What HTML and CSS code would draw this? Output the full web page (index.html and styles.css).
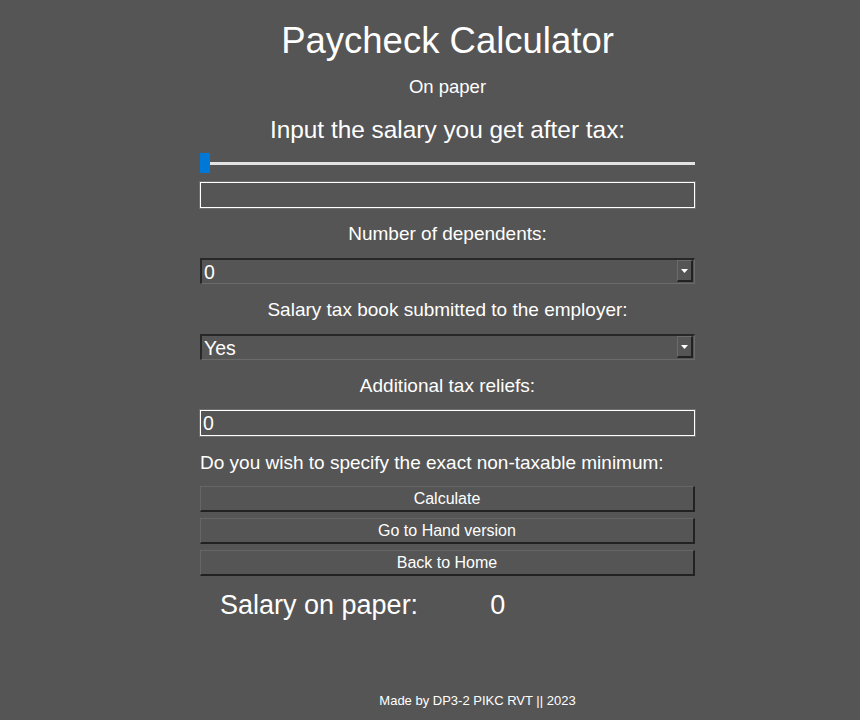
FILE: index.html
```html
<!DOCTYPE html>
<html>
<head>
<meta charset="utf-8">
<title>Paycheck Calculator</title>
<link rel="stylesheet" href="styles.css">
</head>
<body>
<main class="page">
  <h1 class="title">Paycheck Calculator</h1>
  <p class="subtitle">On paper</p>
  <p class="prompt">Input the salary you get after tax:</p>
  <input class="slider" type="range" min="0" max="100" value="0">
  <input class="field field-salary" type="text" value="">
  <p class="label">Number of dependents:</p>
  <div class="select-wrap">
    <select class="select"><option>0</option></select>
    <span class="select-btn"><svg width="7" height="4" viewBox="0 0 7 4"><path d="M0 0H7L3.5 4Z" fill="#fff"/></svg></span>
  </div>
  <p class="label">Salary tax book submitted to the employer:</p>
  <div class="select-wrap">
    <select class="select"><option>Yes</option></select>
    <span class="select-btn"><svg width="7" height="4" viewBox="0 0 7 4"><path d="M0 0H7L3.5 4Z" fill="#fff"/></svg></span>
  </div>
  <p class="label">Additional tax reliefs:</p>
  <input class="field" type="text" value="0">
  <p class="question">Do you wish to specify the exact non-taxable minimum:</p>
  <div class="buttons">
    <button class="btn">Calculate</button>
    <button class="btn">Go to Hand version</button>
    <button class="btn">Back to Home</button>
  </div>
  <div class="result">
    <span class="result-label">Salary on paper:</span>
    <span class="result-value">0</span>
  </div>
</main>
<footer class="footer">Made by DP3-2 PIKC RVT || 2023</footer>
</body>
</html>
```
FILE: styles.css
```css
html, body {
  margin: 0;
  padding: 0;
}
body {
  background: #555555;
  color: #ffffff;
  font-family: "Liberation Sans", Arial, sans-serif;
  min-height: 720px;
  display: flex;
  flex-direction: column;
  align-items: center;
  padding-left: 35px;
  box-sizing: border-box;
}
.page {
  width: 495px;
  display: flex;
  flex-direction: column;
}
.title {
  margin: 21px 0 0;
  font-size: 36.5px;
  line-height: 40px;
  font-weight: normal;
  text-align: center;
}
.subtitle {
  margin: 15px 0 0;
  font-size: 18.5px;
  line-height: 22px;
  text-align: center;
}
.prompt {
  margin: 18px 0 0;
  font-size: 24.4px;
  line-height: 28px;
  text-align: center;
}
.slider {
  -webkit-appearance: none;
  appearance: none;
  margin: 9px 0 0;
  padding: 0;
  width: 495px;
  height: 20px;
  background: transparent;
  display: block;
}
.slider::-webkit-slider-runnable-track {
  height: 3px;
  background: #e3e3e3;
  border: none;
}
.slider::-webkit-slider-thumb {
  -webkit-appearance: none;
  appearance: none;
  width: 10px;
  height: 20px;
  margin-top: -8.5px;
  background: #0078d7;
  border: none;
  border-radius: 0;
}
.field {
  margin: 13px 0 0;
  box-sizing: border-box;
  width: 495px;
  height: 26px;
  padding: 0 2px;
  background: #555555;
  color: #ffffff;
  border: 1px solid #ffffff;
  box-shadow: 0 0 0 1px #6e6e6e;
  font-family: "Liberation Sans", Arial, sans-serif;
  font-size: 19.5px;
  outline: none;
}
.field-salary {
  margin-top: 9px;
}
.label {
  margin: 15px 0 0;
  font-size: 19px;
  line-height: 22px;
  text-align: center;
}
.select-wrap {
  position: relative;
  margin: 13px 0 0;
  width: 495px;
  height: 26px;
}
.select {
  -webkit-appearance: none;
  appearance: none;
  box-sizing: border-box;
  width: 495px;
  height: 26px;
  margin: 0;
  padding: 0 2px;
  background: #555555;
  color: #ffffff;
  border-style: solid;
  border-width: 2px 1px 1px 2px;
  border-color: #272727 #6b6b6b #6b6b6b #272727;
  font-family: "Liberation Sans", Arial, sans-serif;
  font-size: 19.5px;
  outline: none;
}
.select-btn {
  position: absolute;
  right: 2px;
  top: 2px;
  width: 16px;
  height: 22px;
  box-sizing: border-box;
  border-style: solid;
  border-width: 1px 2px 2px 1px;
  border-color: #6b6b6b #222222 #222222 #6b6b6b;
  background: #555555;
  display: flex;
  align-items: center;
  justify-content: center;
}
.question {
  margin: 16px 0 0;
  font-size: 19px;
  line-height: 22px;
  text-align: left;
}
.buttons {
  margin: 12px 0 0;
  display: flex;
  flex-direction: column;
  gap: 6px;
}
.btn {
  box-sizing: border-box;
  width: 495px;
  height: 26px;
  margin: 0;
  padding: 0;
  background: #555555;
  color: #ffffff;
  border-style: solid;
  border-width: 1px 2px 2px 1px;
  border-color: #666666 #222222 #222222 #666666;
  font-family: "Liberation Sans", Arial, sans-serif;
  font-size: 16px;
}
.result {
  margin: 13px 0 0;
  padding-left: 20px;
  display: flex;
  gap: 72px;
  font-size: 27px;
  line-height: 32px;
}
.footer {
  margin-top: auto;
  margin-bottom: 11px;
  padding-left: 60px;
  font-size: 13px;
  line-height: 16px;
}
```
